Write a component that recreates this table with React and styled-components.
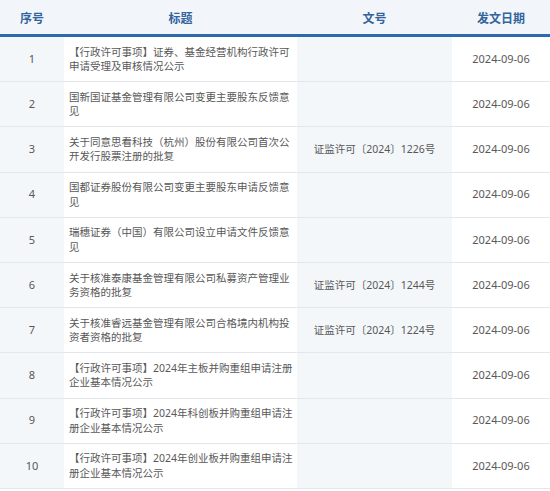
import React from "react";
import styled, { createGlobalStyle } from "styled-components";

const Global = createGlobalStyle`
  html, body { margin: 0; padding: 0; background: #fff; }
  body { font-family: "Noto Sans", "Noto Sans CJK SC", sans-serif; }
`;

const COLS = "64px 233px 155px 98px";

const Table = styled.div`
  width: 550px;
  display: flex;
  flex-direction: column;
`;

const HeadRow = styled.div`
  display: grid;
  grid-template-columns: ${COLS};
  height: 37px;
  box-sizing: border-box;
  background: #f2f6fa;
  border-bottom: 3px solid #2c69ad;
`;

const HeadCell = styled.div`
  display: flex;
  align-items: center;
  justify-content: center;
  font-size: 12px;
  font-weight: 700;
  color: #33649e;
  font-family: "Noto Sans CJK SC", sans-serif;
`;

const Row = styled.div`
  display: grid;
  grid-template-columns: ${COLS};
  height: 45.2px;
  box-sizing: border-box;
  border-bottom: 1px solid #e3e7eb;
`;

const Cell = styled.div`
  display: flex;
  align-items: center;
  justify-content: ${(p) => (p.$left ? "flex-start" : "center")};
  background: ${(p) => (p.$shade ? "#f4f7fa" : "#fff")};
  padding: ${(p) => (p.$left ? "0 3px 0 5px" : "0")};
  color: #585858;
  font-size: 10.5px;
  line-height: 14.5px;
  text-align: ${(p) => (p.$left ? "left" : "center")};
`;

const Num = styled.span`
  font-size: 11px;
`;

const DateText = styled.span`
  font-size: 11px;
`;

const rows = [
  ["【行政许可事项】证券、基金经营机构行政许可申请受理及审核情况公示", ""],
  ["国新国证基金管理有限公司变更主要股东反馈意见", ""],
  ["关于同意思看科技（杭州）股份有限公司首次公开发行股票注册的批复", "证监许可〔2024〕1226号"],
  ["国都证券股份有限公司变更主要股东申请反馈意见", ""],
  ["瑞穗证券（中国）有限公司设立申请文件反馈意见", ""],
  ["关于核准泰康基金管理有限公司私募资产管理业务资格的批复", "证监许可〔2024〕1244号"],
  ["关于核准睿远基金管理有限公司合格境内机构投资者资格的批复", "证监许可〔2024〕1224号"],
  ["【行政许可事项】2024年主板并购重组申请注册企业基本情况公示", ""],
  ["【行政许可事项】2024年科创板并购重组申请注册企业基本情况公示", ""],
  ["【行政许可事项】2024年创业板并购重组申请注册企业基本情况公示", ""],
];

export default function App() {
  return (
    <>
      <Global />
      <Table>
        <HeadRow>
          <HeadCell>序号</HeadCell>
          <HeadCell>标题</HeadCell>
          <HeadCell>文号</HeadCell>
          <HeadCell>发文日期</HeadCell>
        </HeadRow>
        {rows.map(([title, doc], i) => (
          <Row key={i}>
            <Cell $shade>
              <Num>{i + 1}</Num>
            </Cell>
            <Cell $left>{title}</Cell>
            <Cell $shade>{doc}</Cell>
            <Cell>
              <DateText>2024-09-06</DateText>
            </Cell>
          </Row>
        ))}
      </Table>
    </>
  );
}
